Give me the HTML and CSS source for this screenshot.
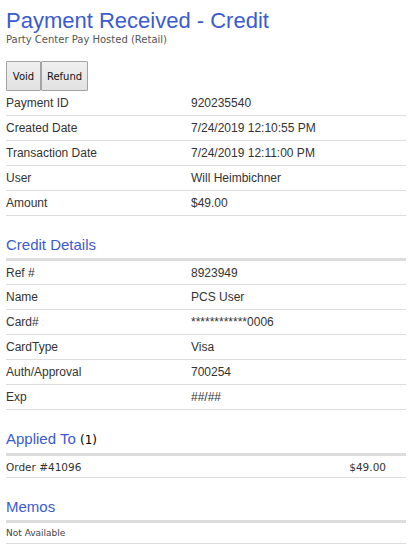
FILE: index.html
```html
<!DOCTYPE html>
<html>
<head>
<meta charset="utf-8">
<link rel="stylesheet" href="styles.css">
</head>
<body>
<div class="page">
  <h1 class="title">Payment Received - Credit</h1>
  <div class="subtitle">Party Center Pay Hosted (Retail)</div>
  <div class="toolbar">
    <button class="btn btn-void">Void</button><button class="btn btn-refund">Refund</button>
  </div>
  <div class="rows">
    <div class="row"><span class="label">Payment ID</span><span class="value">920235540</span></div>
    <div class="row"><span class="label">Created Date</span><span class="value">7/24/2019 12:10:55 PM</span></div>
    <div class="row"><span class="label">Transaction Date</span><span class="value">7/24/2019 12:11:00 PM</span></div>
    <div class="row"><span class="label">User</span><span class="value">Will Heimbichner</span></div>
    <div class="row"><span class="label">Amount</span><span class="value">$49.00</span></div>
  </div>

  <h2 class="section">Credit Details</h2>
  <div class="rows">
    <div class="row first"><span class="label">Ref #</span><span class="value">8923949</span></div>
    <div class="row"><span class="label">Name</span><span class="value">PCS User</span></div>
    <div class="row"><span class="label">Card#</span><span class="value">************0006</span></div>
    <div class="row"><span class="label">CardType</span><span class="value">Visa</span></div>
    <div class="row"><span class="label">Auth/Approval</span><span class="value">700254</span></div>
    <div class="row"><span class="label">Exp</span><span class="value">##/##</span></div>
  </div>

  <h2 class="section">Applied To <span class="count">(1)</span></h2>
  <div class="order-row"><span>Order #41096</span><span>$49.00</span></div>

  <h2 class="section">Memos</h2>
  <div class="memo-row">Not Available</div>
</div>
</body>
</html>
```

FILE: styles.css
```css
html, body {
  margin: 0;
  padding: 0;
  background: #fff;
}
.page {
  padding: 0 6px;
  font-family: "Liberation Sans", Arial, sans-serif;
  color: #333;
}
.title {
  margin: 8px 0 0;
  font-size: 22px;
  line-height: 25px;
  font-weight: normal;
  color: #3b5bd0;
}
.subtitle {
  font-family: "DejaVu Sans", Verdana, sans-serif;
  font-size: 10px;
  line-height: 13px;
  color: #555;
}
.toolbar {
  display: flex;
  margin-top: 15px;
}
.btn {
  height: 30px;
  padding: 0;
  margin: 0;
  font-family: "DejaVu Sans", Verdana, sans-serif;
  font-size: 10px;
  color: #111;
  background: linear-gradient(#f0f0f0, #e2e2e2);
  border: 1px solid #a3a3a3;
  border-radius: 1px;
}
.btn-void {
  width: 35px;
}
.btn-refund {
  width: 47px;
}
.row {
  display: grid;
  grid-template-columns: 185px 1fr;
  align-items: center;
  height: 24px;
  border-bottom: 1px solid #ddd;
  font-size: 12px;
  color: #333;
}
.row.first {
  height: 23px;
}
.section {
  margin: 19px 0 0;
  padding-bottom: 3px;
  font-size: 15px;
  line-height: 20px;
  font-weight: normal;
  color: #3b5bd0;
  border-bottom: 3px solid #dcdcdc;
}
.count {
  font-family: "DejaVu Sans", Verdana, sans-serif;
  font-size: 12px;
  color: #000;
}
.order-row {
  display: flex;
  justify-content: space-between;
  align-items: center;
  height: 21px;
  padding-right: 20px;
  border-bottom: 1px solid #ddd;
  font-family: "DejaVu Sans", Verdana, sans-serif;
  font-size: 10.5px;
  color: #333;
}
.memo-row {
  display: flex;
  align-items: center;
  height: 20px;
  border-bottom: 1px solid #ddd;
  font-family: "DejaVu Sans", Verdana, sans-serif;
  font-size: 9px;
  color: #444;
}
```
